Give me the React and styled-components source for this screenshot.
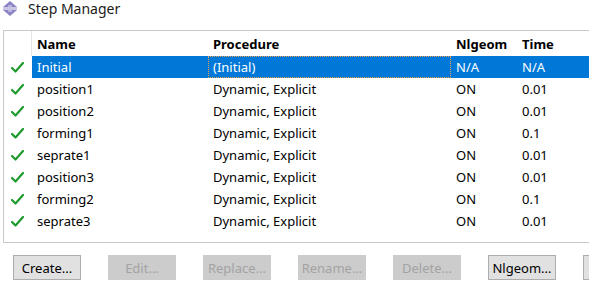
import React from 'react';
import styled, { createGlobalStyle } from 'styled-components';

const GlobalStyle = createGlobalStyle`
  html, body {
    margin: 0;
    padding: 0;
    background: #ffffff;
  }
  body {
    font-family: 'Noto Sans', 'Open Sans', sans-serif;
    font-size: 13px;
    color: #000;
    overflow: hidden;
  }
`;

const Window = styled.div`
  width: 589px;
  height: 286px;
  overflow: hidden;
  background: #ffffff;
  display: flex;
  flex-direction: column;
`;

const TitleBar = styled.div`
  display: flex;
  align-items: center;
  gap: 10px;
  height: 16px;
  padding: 0 0 0 2px;
  font-size: 14px;
  color: #1a1a1a;
`;

const TableBox = styled.div`
  margin: 14px 0 0 3px;
  width: 640px;
  height: 213px;
  border: 1px solid #c9c9c9;
  border-right: none;
  box-sizing: border-box;
  background: #fff;
`;

const Row = styled.div`
  display: grid;
  grid-template-columns: 28px 176px 243px 66px 1fr;
  height: ${(p) => (p.$header ? '25px' : '22px')};
  align-items: center;
`;

const HeadCell = styled.div`
  height: 100%;
  display: flex;
  align-items: center;
  padding-left: 5px;
  font-weight: 700;
  box-sizing: border-box;
`;

const HeadCorner = styled.div`
  height: 100%;
  border-right: 1px solid #e3e3e3;
`;

const CheckCell = styled.div`
  height: 100%;
  display: flex;
  align-items: center;
  justify-content: center;
  padding-right: 2px;
`;

const Cell = styled.div`
  height: 100%;
  display: flex;
  align-items: center;
  padding-left: 5px;
  box-sizing: border-box;
  color: ${(p) => (p.$selected ? '#ffffff' : '#000')};
  background: ${(p) => (p.$selected ? '#0078d7' : 'transparent')};
  outline: ${(p) => (p.$focus ? '1px dotted #e8a050' : 'none')};
  outline-offset: -1px;
  white-space: nowrap;
`;

const ButtonRow = styled.div`
  display: flex;
  gap: 27px;
  padding: 12px 0 0 13px;
`;

const Button = styled.div`
  flex: 0 0 auto;
  width: 68px;
  height: 25px;
  box-sizing: border-box;
  display: flex;
  align-items: center;
  justify-content: center;
  font-size: 13px;
  background: ${(p) => (p.$disabled ? '#cccccc' : '#e1e1e1')};
  color: ${(p) => (p.$disabled ? '#a3a3a3' : '#000')};
  border: 1px solid ${(p) => (p.$disabled ? '#cccccc' : '#adadad')};
`;

const ManagerIcon = () => (
  <svg width="16" height="15" viewBox="0 0 16 15">
    <polygon points="8,0 15,6 1,6" fill="#8a84c4" />
    <polygon points="1,9 15,9 8,15" fill="#8a84c4" />
    <rect x="6" y="4" width="4" height="7" fill="#b6b2dc" />
    <rect x="1" y="6" width="14" height="3" fill="#c9c7e4" />
  </svg>
);

const Check = () => (
  <svg width="13" height="11" viewBox="0 0 13 11">
    <path d="M1 6 L4.5 9.5 L12 1" fill="none" stroke="#1e9a2e" strokeWidth="2.2" strokeLinecap="round" strokeLinejoin="round" />
  </svg>
);

const steps = [
  ['Initial', '(Initial)', 'N/A', 'N/A'],
  ['position1', 'Dynamic, Explicit', 'ON', '0.01'],
  ['position2', 'Dynamic, Explicit', 'ON', '0.01'],
  ['forming1', 'Dynamic, Explicit', 'ON', '0.1'],
  ['seprate1', 'Dynamic, Explicit', 'ON', '0.01'],
  ['position3', 'Dynamic, Explicit', 'ON', '0.01'],
  ['forming2', 'Dynamic, Explicit', 'ON', '0.1'],
  ['seprate3', 'Dynamic, Explicit', 'ON', '0.01'],
];

const buttons = [
  ['Create...', false],
  ['Edit...', true],
  ['Replace...', true],
  ['Rename...', true],
  ['Delete...', true],
  ['Nlgeom...', false],
  ['', false],
];

export default function App() {
  return (
    <Window>
      <GlobalStyle />
      <TitleBar>
        <ManagerIcon />
        <span>Step Manager</span>
      </TitleBar>
      <TableBox>
        <Row $header>
          <HeadCorner />
          <HeadCell>Name</HeadCell>
          <HeadCell>Procedure</HeadCell>
          <HeadCell>Nlgeom</HeadCell>
          <HeadCell>Time</HeadCell>
        </Row>
        {steps.map((s, i) => {
          const sel = i === 0;
          return (
            <Row key={s[0]}>
              <CheckCell>
                <Check />
              </CheckCell>
              <Cell $selected={sel}>{s[0]}</Cell>
              <Cell $selected={sel} $focus={sel}>{s[1]}</Cell>
              <Cell $selected={sel}>{s[2]}</Cell>
              <Cell $selected={sel}>{s[3]}</Cell>
            </Row>
          );
        })}
      </TableBox>
      <ButtonRow>
        {buttons.map(([label, disabled], i) => (
          <Button key={i} $disabled={disabled}>
            {label}
          </Button>
        ))}
      </ButtonRow>
    </Window>
  );
}
